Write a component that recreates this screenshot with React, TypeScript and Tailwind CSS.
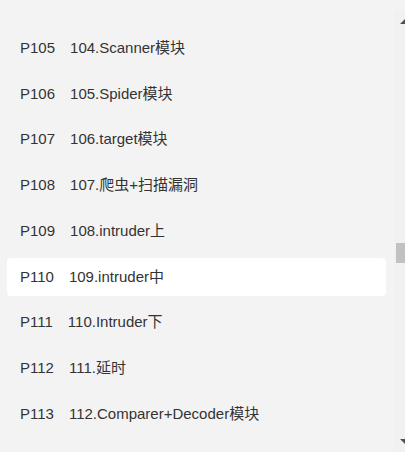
import React from "react";

const LESSONS = [
  { page: "P104", title: "103.Repeater模块" },
  { page: "P105", title: "104.Scanner模块" },
  { page: "P106", title: "105.Spider模块" },
  { page: "P107", title: "106.target模块" },
  { page: "P108", title: "107.爬虫+扫描漏洞" },
  { page: "P109", title: "108.intruder上" },
  { page: "P110", title: "109.intruder中" },
  { page: "P111", title: "110.Intruder下" },
  { page: "P112", title: "111.延时" },
  { page: "P113", title: "112.Comparer+Decoder模块" },
  { page: "P114", title: "113.Sequencer模块" },
];

const ACTIVE = "P110";

function Arrow({ up }: { up: boolean }) {
  return (
    <svg width="5" height="5" viewBox="0 0 5 5" className="block">
      {up ? (
        <polygon points="5,0 5,5 0,5" fill="#505050" />
      ) : (
        <polygon points="0,0 5,0 5,5" fill="#505050" />
      )}
    </svg>
  );
}

export default function App() {
  return (
    <div
      className="flex flex-col h-screen w-full overflow-hidden bg-[#f3f3f3] text-[#333333]"
      style={{ fontFamily: "'Liberation Sans', 'Noto Sans CJK SC', sans-serif" }}
    >
      <div className="h-[10px] shrink-0" />

      <div className="flex flex-1 min-h-0">
        {/* playlist */}
        <div className="flex-1 min-w-0 overflow-hidden pl-[7px] pr-[8px]">
          <div className="flex flex-col gap-[7.75px] -mt-[27px]">
            {LESSONS.map((item) => {
              const isActive = item.page === ACTIVE;
              return (
                <div
                  key={item.page}
                  className={`h-[38px] shrink-0 flex items-center pl-[13px] rounded-[4px] text-[15px] leading-[20px] whitespace-nowrap ${
                    isActive ? "bg-white" : ""
                  }`}
                >
                  <span className="mr-[15px]">{item.page}</span>
                  <span>{item.title}</span>
                </div>
              );
            })}
          </div>
        </div>

        {/* scrollbar */}
        <div className="w-[11px] shrink-0 flex flex-col bg-[#f1f1f1]">
          <div className="mt-[9px] ml-[6px]">
            <Arrow up />
          </div>
          <div className="mt-[219px] ml-[2px] w-[9px] h-[20px] bg-[#c1c1c1]" />
          <div className="flex-1" />
          <div className="mb-[8px] ml-[6px]">
            <Arrow up={false} />
          </div>
        </div>
      </div>
    </div>
  );
}
